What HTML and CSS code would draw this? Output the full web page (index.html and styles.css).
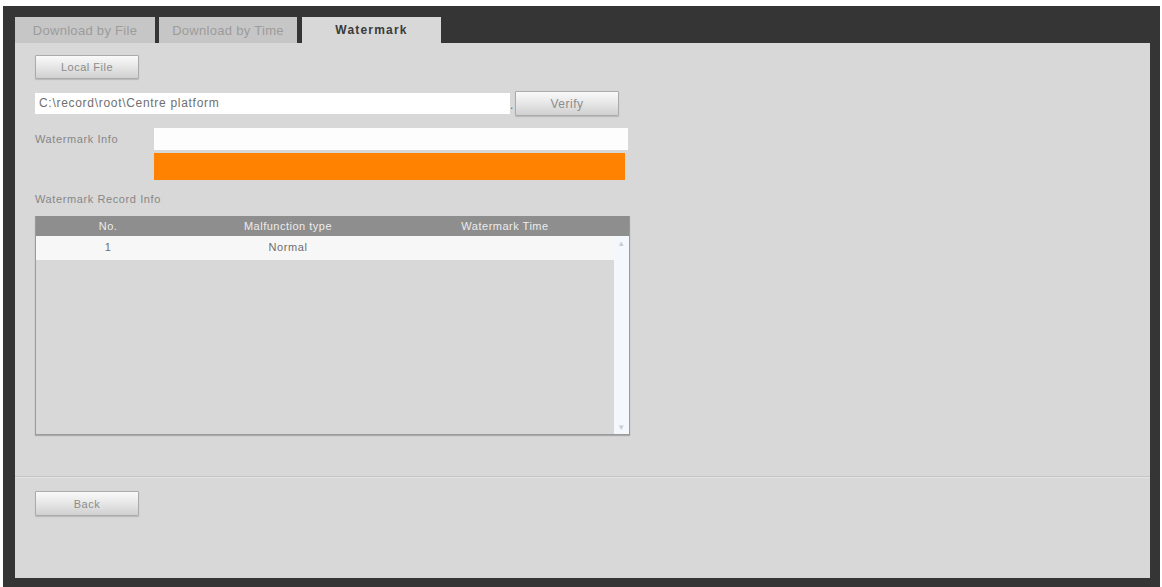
FILE: index.html
```
<!DOCTYPE html>
<html lang="en">
<head>
  <meta charset="UTF-8" />
  <title>Watermark</title>
  <link rel="stylesheet" href="styles.css">
</head>
<body>
  <div class="frame">
    <div class="tabs">
      <div class="tab tab-file">Download by File</div>
      <div class="tab tab-time">Download by Time</div>
      <div class="tab tab-mark active">Watermark</div>
    </div>

    <div class="panel">
      <div class="top">
        <button class="btn btn-local">Local File</button>

        <div class="path-row">
          <div class="path">C:\record\root\Centre platform</div>
          <span class="dot">.</span>
          <button class="btn btn-verify">Verify</button>
        </div>

        <div class="info-row">
          <div class="label">Watermark Info</div>
          <div class="info-boxes">
            <div class="info-white"></div>
            <div class="info-orange"></div>
          </div>
        </div>

        <div class="label record-label">Watermark Record Info</div>

        <div class="table">
          <div class="thead">
            <span class="c-no">No.</span>
            <span class="c-type">Malfunction type</span>
            <span class="c-time">Watermark Time</span>
          </div>
          <div class="tbody">
            <div class="rows">
              <div class="row">
                <span class="c-no">1</span>
                <span class="c-type">Normal</span>
                <span class="c-time"></span>
              </div>
            </div>
            <div class="scroll">
              <span class="arrow">&#9652;</span>
              <span class="arrow">&#9662;</span>
            </div>
          </div>
        </div>
      </div>

      <div class="bottom">
        <button class="btn btn-back">Back</button>
      </div>
    </div>
  </div>
</body>
</html>
```

FILE: styles.css
```
* {
  margin: 0;
  padding: 0;
  box-sizing: border-box;
}

body {
  background: #fff;
  font-family: 'Liberation Sans', Arial, sans-serif;
  font-size: 12px;
  color: #8a8a8a;
}

.frame {
  margin: 6px 0 0 3px;
  width: 1157px;
  height: 581px;
  background: #353535;
  padding: 11px 10px 9px 12px;
  display: flex;
  flex-direction: column;
}

.tabs {
  display: flex;
  height: 26px;
}

.tab {
  background: #c6c6c6;
  color: #9c9c9c;
  text-align: center;
  line-height: 27px;
  font-size: 13px;
  letter-spacing: 0.3px;
  margin-right: 4px;
}

.tab-file { width: 140px; }
.tab-time { width: 138px; margin-right: 5px; }
.tab-mark { width: 139px; }

.tab.active {
  background: #d8d8d8;
  color: #3a3a3a;
  font-weight: bold;
  font-size: 12px;
  letter-spacing: 1.2px;
}

.panel {
  flex: 1;
  background: #d8d8d8;
  display: flex;
  flex-direction: column;
}

.top {
  padding: 12px 20px 0 20px;
  height: 434px;
  border-bottom: 1px solid #c4c4c4;
  box-shadow: 0 1px 0 #e4e4e4;
}

.btn {
  font-family: inherit;
  font-size: 11px;
  letter-spacing: 0.5px;
  color: #8c8c8c;
  width: 104px;
  height: 24px;
  border: 1px solid #ababab;
  border-radius: 1px;
  background: linear-gradient(#fafafa, #e8e8e8 45%, #d0d0d0);
  box-shadow: 0 1px 1px #b8b8b8;
}

.path-row {
  display: flex;
  align-items: center;
  margin-top: 12px;
  height: 25px;
}

.path {
  width: 475px;
  height: 21px;
  background: #fff;
  color: #707070;
  line-height: 21px;
  padding-left: 4px;
  font-size: 12px;
  letter-spacing: 0.7px;
}

.dot {
  width: 5px;
  color: #666;
  line-height: 10px;
  align-self: flex-end;
  margin-bottom: 6px;
}

.btn-verify {
  height: 25px;
  font-size: 12px;
}

.info-row {
  display: flex;
  margin-top: 12px;
}

.label {
  width: 119px;
  font-size: 11px;
  letter-spacing: 0.6px;
  color: #878787;
}

.info-row .label {
  padding-top: 5px;
}

.info-white {
  width: 474px;
  height: 22px;
  background: #fdfdfd;
}

.info-orange {
  margin-top: 3px;
  width: 471px;
  height: 27px;
  background: #ff8200;
}

.record-label {
  width: auto;
  margin-top: 13px;
  height: 14px;
}

.table {
  margin-top: 9px;
  width: 595px;
  height: 219px;
  border: 1px solid #9a9a9a;
  border-top: none;
  box-shadow: 0 1px 1px #aaa;
  display: flex;
  flex-direction: column;
}

.thead {
  display: flex;
  height: 20px;
  background: #8e8e8e;
  color: #ececec;
  font-size: 11px;
  letter-spacing: 0.5px;
  line-height: 20px;
}

.c-no { width: 144px; text-align: center; }
.c-type { width: 216px; text-align: center; }
.c-time { width: 218px; text-align: center; }

.tbody {
  flex: 1;
  display: flex;
}

.rows {
  flex: 1;
}

.row {
  display: flex;
  height: 24px;
  background: #f7f7f7;
  color: #6e6e6e;
  font-size: 11px;
  letter-spacing: 0.6px;
  line-height: 23px;
}

.scroll {
  width: 17px;
  background: #f4f7fc;
  display: flex;
  flex-direction: column;
  justify-content: space-between;
  align-items: center;
  color: #c8ccd4;
  font-size: 9px;
  padding: 2px 0;
}

.bottom {
  padding: 14px 20px 0 20px;
}

.btn-back {
  height: 25px;
}
```
